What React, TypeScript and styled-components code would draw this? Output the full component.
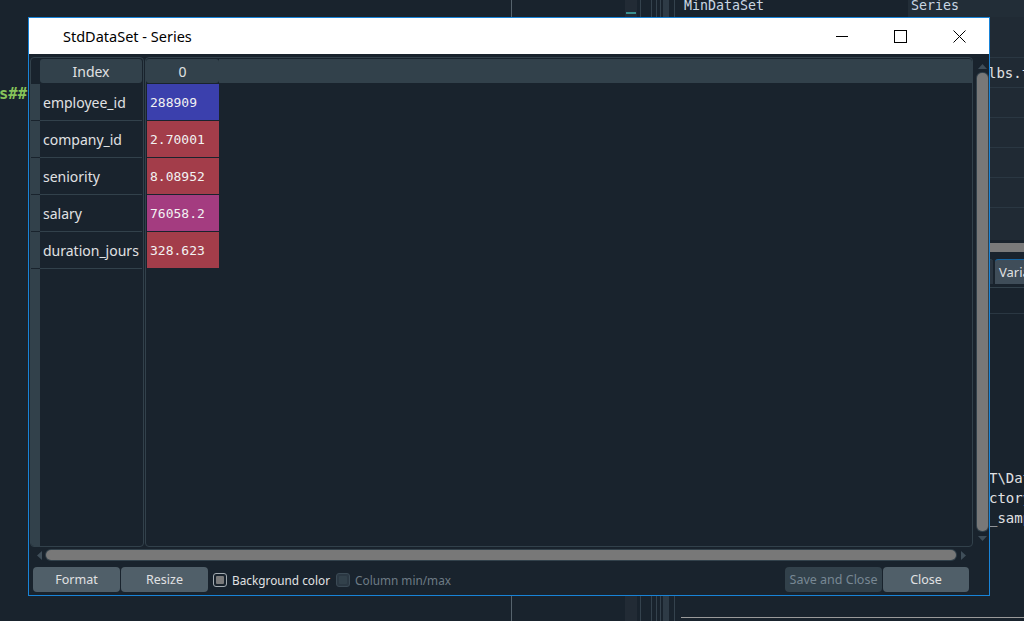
import React from 'react';
import styled, { createGlobalStyle } from 'styled-components';

const GlobalStyle = createGlobalStyle`
  html, body { margin: 0; padding: 0; background: #19232d; overflow: hidden; }
  #root { width: 1024px; height: 621px; }
  * { box-sizing: border-box; }
`;

const UI = `"Noto Sans", "Open Sans", sans-serif`;
const MONO = `"DejaVu Sans Mono", "Liberation Mono", monospace`;

/* ---------- IDE background ---------- */
const Desktop = styled.div`
  position: relative;
  width: 1024px;
  height: 621px;
  overflow: hidden;
  background: #19232d;
  display: flex;
  font-family: ${UI};
`;

const EditorPane = styled.div`
  width: 511px;
  flex: none;
  padding-top: 87px;
`;

const EditorLine = styled.div`
  font-family: ${MONO};
  font-weight: bold;
  font-size: 15.5px;
  line-height: 15px;
  color: #86c35a;
  white-space: pre;
  margin-left: -1px;
`;

const Stripe = styled.div<{ $w: number; $c?: string }>`
  width: ${(p) => p.$w}px;
  flex: none;
  background: ${(p) => p.$c ?? 'transparent'};
`;

const DockColumn = styled.div`
  width: 12px;
  flex: none;
  background: #222b35;
  padding: 12px 0 0 1px;
`;

const DockMark = styled.div`
  width: 10px;
  height: 2px;
  background: #3a8f8f;
`;

const RightPane = styled.div`
  width: 343px;
  flex: none;
  display: flex;
  flex-direction: column;
`;

const VarHeader = styled.div`
  height: 17px;
  flex: none;
  display: flex;
`;

const VarHeadCell = styled.div<{ $w?: number; $bg: string }>`
  ${(p) => (p.$w ? `width: ${p.$w}px; flex: none;` : 'flex: 1;')}
  background: ${(p) => p.$bg};
  font-family: ${MONO};
  font-size: 13.3px;
  line-height: 12px;
  color: #c9d6e3;
  padding-left: 3px;
  white-space: pre;
  overflow: hidden;
`;

const VarTable = styled.div`
  height: 223px;
  flex: none;
  background: #202a34;
  padding-top: 6px;
`;

const VarRow = styled.div<{ $h: number }>`
  height: ${(p) => p.$h}px;
  border-bottom: 1px solid #2a3742;
  display: flex;
  align-items: center;
  padding: 1px 0 0 307px;
  font-family: ${MONO};
  font-size: 14px;
  color: #e0e1e3;
  white-space: pre;
  overflow: hidden;
`;

const VarScroll = styled.div`
  height: 13px;
  flex: none;
  background: #19232d;
  padding: 3px 0 1px 0;
`;

const VarScrollHandle = styled.div`
  height: 9px;
  background: #7a7a7a;
  border-radius: 4px 0 0 4px;
`;

const TabBar = styled.div`
  height: 35px;
  flex: none;
  display: flex;
  align-items: flex-start;
  padding: 6px 0 0 300px;
  gap: 2px;
  border-bottom: 1px solid #32414b;
`;

const Tab = styled.div<{ $active?: boolean }>`
  height: 25px;
  flex: none;
  padding: 0 8px 0 4px;
  display: flex;
  align-items: center;
  border-top: 1px solid ${(p) => (p.$active ? '#1464a0' : '#32414b')};
  background: ${(p) => (p.$active ? '#3f4d59' : '#2a3540')};
  border-radius: 3px 3px 0 0;
  font-size: 13px;
  color: #e0e1e3;
  white-space: nowrap;
`;

const Console = styled.div`
  flex: 1;
  display: flex;
  flex-direction: column;
  padding-top: 25px;
`;

const ConsoleRule = styled.div`
  height: 1px;
  background: #2a3742;
  margin-bottom: 154px;
`;

const ConsoleLine = styled.div`
  height: 20px;
  padding-left: 308px;
  font-family: ${MONO};
  font-size: 14px;
  line-height: 20px;
  color: #e0e1e3;
  white-space: pre;
  overflow: hidden;
`;

const BottomRule = styled.div`
  height: 1px;
  background: #9a9a9a;
  margin-top: auto;
  margin-bottom: 3px;
`;

/* ---------- dialog window ---------- */
const Window = styled.div`
  position: absolute;
  left: 28px;
  top: 17px;
  width: 962px;
  height: 579px;
  border: 1px solid #1883d7;
  background: #19232d;
  display: flex;
  flex-direction: column;
`;

const TitleBar = styled.div`
  height: 37px;
  flex: none;
  background: #ffffff;
  border-bottom: 1px solid #19232d;
  display: flex;
  align-items: center;
`;

const Title = styled.div`
  flex: 1;
  padding-left: 34px;
  padding-bottom: 1px;
  font-family: ${UI};
  font-size: 14.5px;
  color: #000;
`;

const CaptionButton = styled.div<{ $w: number }>`
  width: ${(p) => p.$w}px;
  height: 36px;
  flex: none;
  display: flex;
  align-items: center;
  justify-content: center;
`;

const Body = styled.div`
  flex: 1;
  display: flex;
  flex-direction: column;
  padding: 2px 1px 0 1px;
`;

const TablesRow = styled.div`
  height: 490px;
  flex: none;
  display: flex;
`;

const Frame = styled.div<{ $w: number }>`
  width: ${(p) => p.$w}px;
  flex: none;
  border: 1px solid #32414b;
  border-radius: 4px;
  display: flex;
  flex-direction: column;
  overflow: hidden;
`;

const HeaderRow = styled.div`
  height: 25px;
  flex: none;
  display: flex;
  padding-top: 1px;
  margin-bottom: 1px;
`;

const Corner = styled.div`
  width: 9px;
  flex: none;
`;

const HeaderCell = styled.div<{ $w?: number }>`
  ${(p) => (p.$w ? `width: ${p.$w}px; flex: none;` : 'flex: 1;')}
  background: #32414b;
  border-radius: 3px;
  display: flex;
  align-items: center;
  justify-content: center;
  padding-top: 1px;
  font-family: ${UI};
  font-size: 14px;
  color: #e0e1e3;
`;

const HeaderFill = styled.div`
  flex: 1;
  background: #32414b;
  border-radius: 0 3px 0 0;
`;

const IndexBody = styled.div`
  flex: 1;
  display: flex;
`;

const VHeader = styled.div`
  width: 9px;
  flex: none;
  background: #32414b;
  display: flex;
  flex-direction: column;
`;

const VHeaderSeg = styled.div`
  height: 37px;
  border-bottom: 1px solid #19232d;
`;

const LabelColumn = styled.div`
  flex: 1;
  margin-right: 1px;
  display: flex;
  flex-direction: column;
`;

const IndexLabel = styled.div`
  height: 37px;
  border-bottom: 1px solid #32414b;
  display: flex;
  align-items: center;
  padding: 1px 0 0 3px;
  font-family: ${UI};
  font-size: 14px;
  color: #e0e1e3;
  white-space: nowrap;
`;

const DataGap = styled.div`
  width: 1px;
  flex: none;
`;

const DataBody = styled.div`
  flex: 1;
  padding-left: 1px;
  display: flex;
  flex-direction: column;
`;

const ValueCell = styled.div<{ $bg: string }>`
  width: 72px;
  height: 36px;
  margin-bottom: 1px;
  background: ${(p) => p.$bg};
  display: flex;
  align-items: center;
  padding: 1px 0 0 3px;
  font-family: ${MONO};
  font-size: 13px;
  color: #f2f2f2;
`;

const VScroll = styled.div`
  width: 14px;
  flex: none;
  margin-left: 2px;
  margin-top: 2px;
  margin-bottom: 2px;
  display: flex;
  flex-direction: column;
  align-items: center;
`;

const ArrowBox = styled.div<{ $h: number }>`
  height: ${(p) => p.$h}px;
  flex: none;
  display: flex;
  align-items: center;
  justify-content: center;
`;

const VHandle = styled.div`
  flex: 1;
  width: 11px;
  background: #787878;
  border-radius: 5px;
  box-shadow: 0 0 0 1px #32414b;
`;

const HScroll = styled.div`
  height: 14px;
  flex: none;
  margin: 1px 17px 0 3px;
  display: grid;
  grid-template-columns: 13px 1fr 15px;
  align-items: center;
`;

const HHandle = styled.div`
  height: 10px;
  background: #787878;
  border-radius: 5px;
  box-shadow: 0 0 0 1px #32414b;
`;

const ButtonRow = styled.div`
  height: 25px;
  flex: none;
  margin-top: 5px;
  padding: 0 19px 0 3px;
  display: flex;
  align-items: center;
`;

const Button = styled.div<{ $w: number; $disabled?: boolean }>`
  width: ${(p) => p.$w}px;
  height: 25px;
  flex: none;
  border-radius: 4px;
  background: ${(p) => (p.$disabled ? '#32414b' : '#505f69')};
  color: ${(p) => (p.$disabled ? '#788894' : '#e0e1e3')};
  font-family: ${UI};
  font-size: 12.5px;
  display: flex;
  align-items: center;
  justify-content: center;
  white-space: nowrap;
`;

const Spacer = styled.div<{ $w?: number }>`
  ${(p) => (p.$w !== undefined ? `width: ${p.$w}px; flex: none;` : 'flex: 1;')}
`;

const CheckBox = styled.div<{ $disabled?: boolean }>`
  width: 14px;
  height: 14px;
  flex: none;
  border-radius: 3px;
  border: 1px solid ${(p) => (p.$disabled ? '#3b4a55' : '#a3abb1')};
  background: ${(p) => (p.$disabled ? '#2b3843' : '#19232d')};
  padding: 2px;
`;

const CheckFill = styled.div<{ $disabled?: boolean }>`
  width: 100%;
  height: 100%;
  border-radius: 1px;
  background: ${(p) => (p.$disabled ? '#32414b' : '#7a7a7a')};
`;

const CheckLabel = styled.div<{ $disabled?: boolean }>`
  margin-left: 5px;
  font-family: ${UI};
  font-size: 11.8px;
  color: ${(p) => (p.$disabled ? '#6e7b85' : '#e0e1e3')};
  white-space: nowrap;
`;

const rows = [
  { label: 'employee_id', value: '288909', color: '#3b40ad' },
  { label: 'company_id', value: '2.70001', color: '#a33d4a' },
  { label: 'seniority', value: '8.08952', color: '#a33d4a' },
  { label: 'salary', value: '76058.2', color: '#a43c80' },
  { label: 'duration_jours', value: '328.623', color: '#a33d4a' },
];

const TriUp = () => (
  <svg width="9" height="5" viewBox="0 0 9 5"><path d="M0 5 L4.5 0 L9 5 Z" fill="#3f4e59" /></svg>
);
const TriDown = () => (
  <svg width="9" height="5" viewBox="0 0 9 5"><path d="M0 0 L4.5 5 L9 0 Z" fill="#3f4e59" /></svg>
);
const TriLeft = () => (
  <svg width="5" height="9" viewBox="0 0 5 9"><path d="M5 0 L0 4.5 L5 9 Z" fill="#3f4e59" /></svg>
);
const TriRight = () => (
  <svg width="5" height="9" viewBox="0 0 5 9"><path d="M0 0 L5 4.5 L0 9 Z" fill="#3f4e59" /></svg>
);

export default function App() {
  return (
    <>
      <GlobalStyle />
      <Desktop>
        <EditorPane>
          <EditorLine>s##  Series analysis ##</EditorLine>
        </EditorPane>
        <Stripe $w={1} $c="#56636d" />
        <Stripe $w={113} />
        <DockColumn>
          <DockMark />
        </DockColumn>
        <Stripe $w={3} />
        <Stripe $w={1} $c="#34424d" />
        <Stripe $w={10} />
        <Stripe $w={1} $c="#34424d" />
        <Stripe $w={4} />
        <Stripe $w={1} $c="#34424d" />
        <Stripe $w={3} />
        <Stripe $w={1} $c="#34424d" />
        <Stripe $w={2} />
        <Stripe $w={6} $c="#2e3b46" />
        <Stripe $w={5} />
        <Stripe $w={1} $c="#34424d" />
        <Stripe $w={6} />
        <RightPane>
          <VarHeader>
            <VarHeadCell $w={227} $bg="#19232d">MinDataSet</VarHeadCell>
            <VarHeadCell $bg="#222d37">Series</VarHeadCell>
          </VarHeader>
          <VarTable>
            <VarRow $h={35}> </VarRow>
            <VarRow $h={30}>lbs.txt</VarRow>
            <VarRow $h={30}> </VarRow>
            <VarRow $h={30}> </VarRow>
            <VarRow $h={30}> </VarRow>
            <VarRow $h={30}> </VarRow>
          </VarTable>
          <VarScroll>
            <VarScrollHandle />
          </VarScroll>
          <TabBar>
            <Tab />
            <Tab $active>Variable explorer</Tab>
          </TabBar>
          <Console>
            <ConsoleRule />
            <ConsoleLine>T\Data\</ConsoleLine>
            <ConsoleLine>ctory</ConsoleLine>
            <ConsoleLine>_sample</ConsoleLine>
            <BottomRule />
          </Console>
        </RightPane>

        <Window>
          <TitleBar>
            <Title>StdDataSet - Series</Title>
            <CaptionButton $w={58}>
              <svg width="12" height="12" viewBox="0 0 12 12">
                <path d="M0 6.5 H12" stroke="#000" strokeWidth="1" />
              </svg>
            </CaptionButton>
            <CaptionButton $w={58}>
              <svg width="13" height="13" viewBox="0 0 13 13">
                <rect x="0.5" y="0.5" width="12" height="12" fill="none" stroke="#000" strokeWidth="1" />
              </svg>
            </CaptionButton>
            <CaptionButton $w={60}>
              <svg width="13" height="13" viewBox="0 0 13 13">
                <path d="M0.5 0.5 L12.5 12.5 M12.5 0.5 L0.5 12.5" stroke="#000" strokeWidth="1" />
              </svg>
            </CaptionButton>
          </TitleBar>
          <Body>
            <TablesRow>
              <Frame $w={114}>
                <HeaderRow>
                  <Corner />
                  <HeaderCell>Index</HeaderCell>
                  <Spacer $w={1} />
                </HeaderRow>
                <IndexBody>
                  <VHeader>
                    {rows.map((r) => (
                      <VHeaderSeg key={r.label} />
                    ))}
                  </VHeader>
                  <LabelColumn>
                    {rows.map((r) => (
                      <IndexLabel key={r.label}>{r.label}</IndexLabel>
                    ))}
                  </LabelColumn>
                </IndexBody>
              </Frame>
              <DataGap />
              <Frame $w={828}>
                <HeaderRow>
                  <HeaderCell $w={73}>0</HeaderCell>
                  <HeaderFill />
                </HeaderRow>
                <DataBody>
                  {rows.map((r) => (
                    <ValueCell key={r.label} $bg={r.color}>
                      {r.value}
                    </ValueCell>
                  ))}
                </DataBody>
              </Frame>
              <VScroll>
                <ArrowBox $h={14}>
                  <TriUp />
                </ArrowBox>
                <VHandle />
                <ArrowBox $h={14}>
                  <TriDown />
                </ArrowBox>
              </VScroll>
            </TablesRow>
            <HScroll>
              <ArrowBox $h={14}>
                <TriLeft />
              </ArrowBox>
              <HHandle />
              <ArrowBox $h={14}>
                <TriRight />
              </ArrowBox>
            </HScroll>
            <ButtonRow>
              <Button $w={87}>Format</Button>
              <Spacer $w={1} />
              <Button $w={87}>Resize</Button>
              <Spacer $w={5} />
              <CheckBox>
                <CheckFill />
              </CheckBox>
              <CheckLabel>Background color</CheckLabel>
              <Spacer $w={6} />
              <CheckBox $disabled>
                <CheckFill $disabled />
              </CheckBox>
              <CheckLabel $disabled>Column min/max</CheckLabel>
              <Spacer />
              <Button $w={97} $disabled>
                Save and Close
              </Button>
              <Spacer $w={1} />
              <Button $w={86}>Close</Button>
            </ButtonRow>
          </Body>
        </Window>
      </Desktop>
    </>
  );
}
